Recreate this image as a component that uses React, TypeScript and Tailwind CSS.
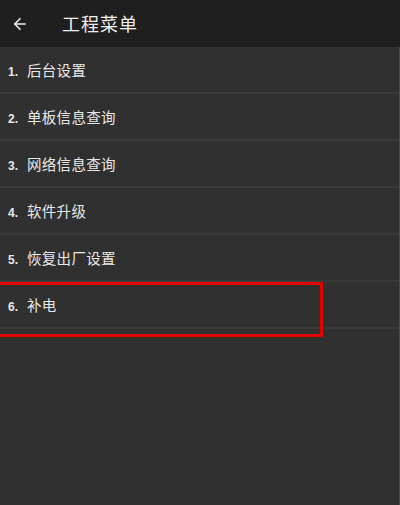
import { ArrowLeft } from "lucide-react";

const items = [
  "后台设置",
  "单板信息查询",
  "网络信息查询",
  "软件升级",
  "恢复出厂设置",
  "补电",
];

export default function App() {
  return (
    <div
      className="relative w-[400px] h-[505px] overflow-hidden bg-[#303030] text-[#e8e8e8]"
      style={{ fontFamily: '"Noto Sans CJK SC", "Noto Sans", sans-serif' }}
    >
      {/* Toolbar */}
      <div className="flex h-[47px] items-center bg-[#1f1f1f]">
        <ArrowLeft className="ml-[11px] h-[18px] w-[18px] text-[#eeeeee]" strokeWidth={2.2} />
        <span className="ml-[33px] text-[18px] tracking-[1px] text-[#eeeeee]">工程菜单</span>
      </div>

      {/* Menu */}
      <div className="flex flex-col">
        {items.map((label, i) => (
          <div
            key={label}
            className="flex h-[47px] items-center border-b-2 border-[#393939] pl-[8px]"
          >
            <div className="flex items-baseline">
              <span
                className="mr-[4px] w-[15px] text-[12px] font-bold"
                style={{ fontFamily: '"Liberation Sans", sans-serif' }}
              >
                {i + 1}.
              </span>
              <span className="text-[14.5px] tracking-[0.3px]">{label}</span>
            </div>
          </div>
        ))}
      </div>

      {/* Highlight box */}
      <div className="absolute left-[-6px] top-[282px] h-[55px] w-[329px] border-[3px] border-[#e00000]" />

      <div className="absolute right-0 top-[47px] h-[458px] w-[1px] bg-[#4a4a4a]" />
    </div>
  );
}
